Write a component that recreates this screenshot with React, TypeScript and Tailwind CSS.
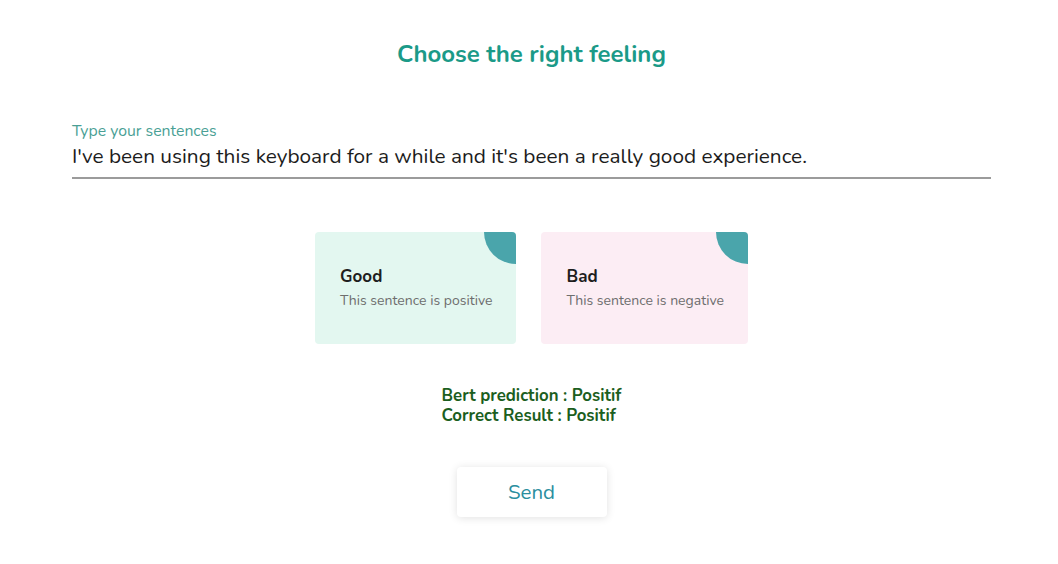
const CARDS = [
  { title: "Good", text: "This sentence is positive", bg: "bg-[#e3f7f0]" },
  { title: "Bad", text: "This sentence is negative", bg: "bg-[#fcedf4]" },
];

export default function App() {
  return (
    <div
      className="w-full min-h-screen bg-white pl-[72px] pr-[67px] pt-[39px] flex flex-col"
      style={{ fontFamily: "Nunito, Lato, 'Open Sans', sans-serif" }}
    >
      <h1 className="text-center text-[24px] leading-[30px] font-bold text-[#1b9a88]">
        Choose the right feeling
      </h1>

      <div className="mt-[53px] border-b-2 border-[#9b9b9b] pb-[5px]">
        <label className="block text-[15.8px] leading-[18px] text-[#4a9f95]">
          Type your sentences
        </label>
        <div className="text-[20.8px] leading-[32px] text-[#1c1c1c]">
          I've been using this keyboard for a while and it's been a really good experience.
        </div>
      </div>

      <div className="mt-[53px] flex justify-center gap-[25px]">
        {CARDS.map(({ title, text, bg }) => (
          <div
            key={title}
            className={`relative overflow-hidden rounded-[4px] h-[112px] pl-[25px] pr-[24px] pt-[34px] ${bg}`}
          >
            <div className="absolute -top-[32px] -right-[32px] w-[64px] h-[64px] rounded-full bg-[#4aa5ab]" />
            <div className="text-[17px] leading-[22px] font-bold text-[#1e1e1e]">{title}</div>
            <div className="mt-[4px] text-[14px] leading-[18px] text-[#6e6e6e]">{text}</div>
          </div>
        ))}
      </div>

      <div className="mt-[42px] flex justify-center">
        <div className="text-[16.8px] leading-[20px] font-bold text-[#1b5e20]">
          <div>Bert prediction : Positif</div>
          <div>Correct Result : Positif</div>
        </div>
      </div>

      <div className="mt-[41px] flex justify-center">
        <button className="w-[150px] h-[50px] rounded-[4px] bg-white shadow-[0_1px_8px_rgba(0,0,0,0.12)] text-[20.5px] text-[#2a8e9e]">
          Send
        </button>
      </div>
    </div>
  );
}
